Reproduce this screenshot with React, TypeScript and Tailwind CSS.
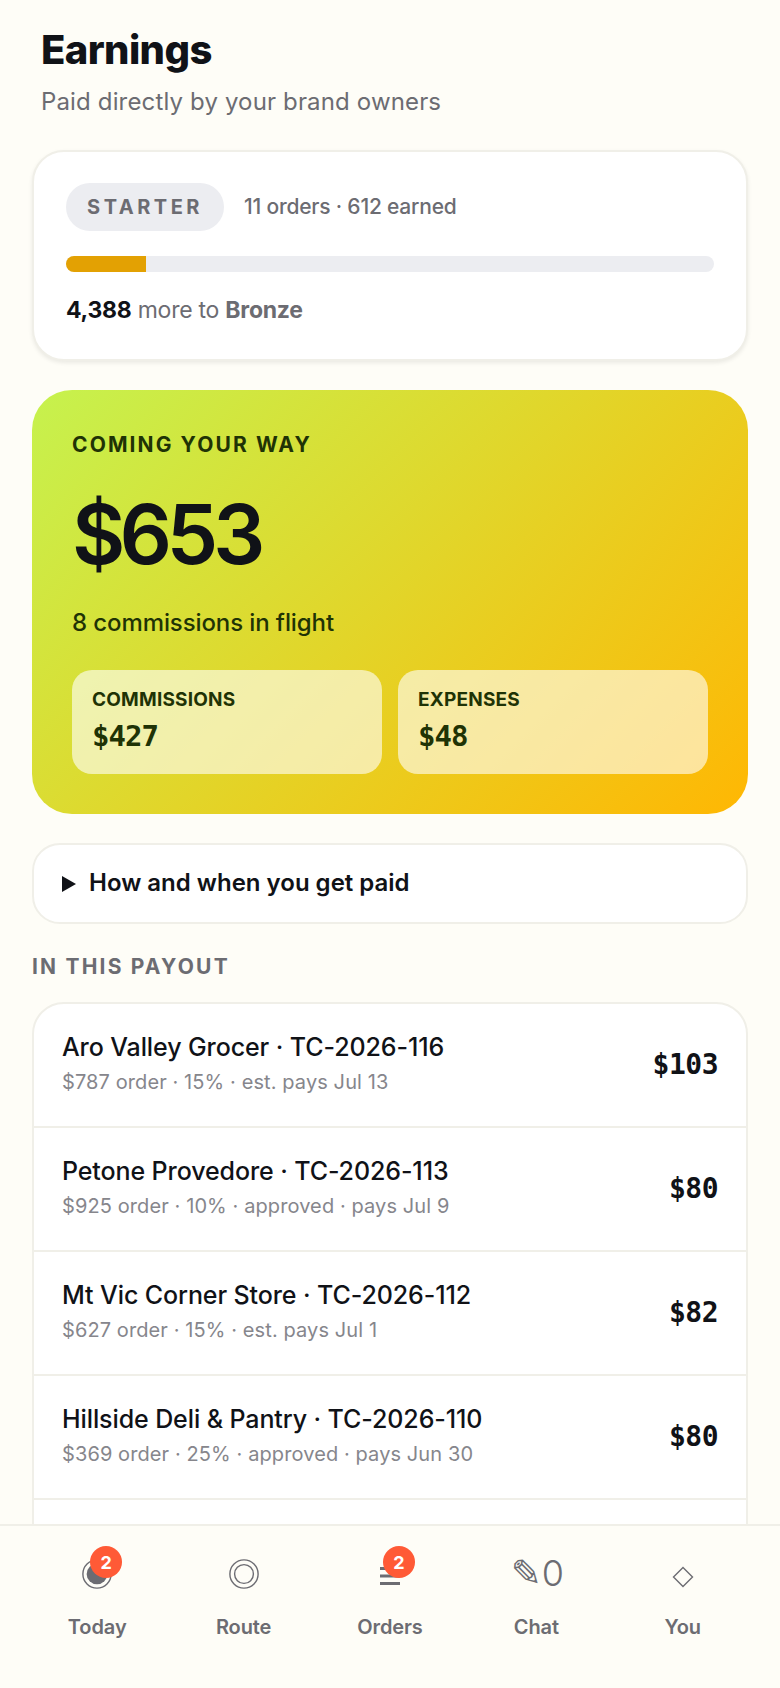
const rows = [
  { name: 'Aro Valley Grocer · TC-2026-116', meta: '$787 order · 15% · est. pays Jul 13', amount: '$103' },
  { name: 'Petone Provedore · TC-2026-113', meta: '$925 order · 10% · approved · pays Jul 9', amount: '$80' },
  { name: 'Mt Vic Corner Store · TC-2026-112', meta: '$627 order · 15% · est. pays Jul 1', amount: '$82' },
  { name: 'Hillside Deli & Pantry · TC-2026-110', meta: '$369 order · 25% · approved · pays Jun 30', amount: '$80' },
];

function TodayIcon() {
  return (
    <svg width="34" height="34" viewBox="0 0 34 34" fill="none">
      <circle cx="17" cy="17" r="15" stroke="#6c6c72" strokeWidth="1.5" />
      <circle cx="17" cy="17" r="11" fill="#6c6c72" />
    </svg>
  );
}

function RouteIcon() {
  return (
    <svg width="34" height="34" viewBox="0 0 34 34" fill="none" stroke="#6c6c72" strokeWidth="1.5">
      <circle cx="17" cy="17" r="15" />
      <circle cx="17" cy="17" r="10" />
    </svg>
  );
}

function OrdersIcon() {
  return (
    <svg width="22" height="22" viewBox="0 0 22 22" fill="#6c6c72">
      <rect x="1" y="4" width="20" height="3" />
      <rect x="1" y="11.5" width="20" height="3" />
      <rect x="1" y="19" width="20" height="3" />
    </svg>
  );
}

function YouIcon() {
  return (
    <svg width="22" height="22" viewBox="0 0 22 22" fill="none" stroke="#6c6c72" strokeWidth="1.4" className="mt-[5px]">
      <path d="M11 1.5 20.5 11 11 20.5 1.5 11z" />
    </svg>
  );
}

const navItems = [
  { label: 'Today', icon: <TodayIcon />, badge: '2' },
  { label: 'Route', icon: <RouteIcon /> },
  { label: 'Orders', icon: <OrdersIcon />, badge: '2' },
  {
    label: 'Chat',
    icon: (
      <span className="ml-[2px] text-[#6c6c72]">
        <span className="font-['DejaVu_Sans',sans-serif] text-[37px]">✎</span>
        <span className="text-[36px] font-light">0</span>
      </span>
    ),
  },
  { label: 'You', icon: <YouIcon /> },
];

export default function App() {
  return (
    <div className="relative h-[1688px] overflow-hidden bg-[#fefdf7] font-['Inter','Noto_Sans',sans-serif] text-[#101217]">
      <div className="px-8 pt-[26px]">
        <h1 className="pl-[9px] text-[40px] leading-[48px] font-extrabold tracking-[-0.6px]">Earnings</h1>
        <p className="mt-[11px] pl-[9px] text-[24px] leading-[34px] tracking-[0.15px] text-[#6c6c72]">Paid directly by your brand owners</p>

        {/* Tier progress */}
        <div className="mt-[31px] h-[211px] rounded-[32px] border-2 border-[#f0efe8] bg-white px-8 pt-[31px] shadow-[0_2px_4px_rgba(0,0,0,0.08)]">
          <div className="flex items-center gap-5">
            <span className="flex h-12 w-[158px] items-center justify-center rounded-3xl bg-[#ecedf1] text-[20px] font-bold tracking-[3.5px] text-[#6c6c72]">STARTER</span>
            <span className="text-[21px] font-medium tracking-[-0.2px] text-[#6c6c72]">11 orders · 612 earned</span>
          </div>
          <div className="mt-[25px] h-4 overflow-hidden rounded-lg bg-[#ecedf1]">
            <div className="h-full w-[80px] bg-[#e3a103]" />
          </div>
          <p className="mt-[22px] text-[23px] leading-[32px] tracking-[-0.25px] text-[#6c6c72]">
            <b className="font-bold text-[#101217]">4,388</b> more to <b className="font-bold">Bronze</b>
          </p>
        </div>

        {/* Hero */}
        <div className="mt-[29px] h-[424px] rounded-[40px] bg-[linear-gradient(135deg,#c6f24e_0%,#ffb703_100%)] px-10 pt-[40px]">
          <p className="text-[21px] leading-[30px] font-bold tracking-[2.1px] text-[#1f3305]">COMING YOUR WAY</p>
          <p className="mt-[25px] text-[82px] leading-[100px] font-semibold tracking-[-6px] tabular-nums">$653</p>
          <p className="mt-[21px] text-[24px] leading-[34px] font-medium tracking-[-0.1px] text-[#1f3305]">8 commissions in flight</p>
          <div className="mt-[30px] grid grid-cols-2 gap-4">
            <div className="h-[104px] rounded-[20px] bg-white/60 px-5 pt-[17px] text-[#1f3305]">
              <p className="text-[19px] leading-[26px] font-bold tracking-[0.2px]">COMMISSIONS</p>
              <p className="mt-[5px] font-['DejaVu_Sans_Mono',monospace] text-[29px] leading-[36px] font-bold tracking-[-1px]">$427</p>
            </div>
            <div className="h-[104px] rounded-[20px] bg-white/60 px-5 pt-[17px] text-[#1f3305]">
              <p className="text-[19px] leading-[26px] font-bold tracking-[0.2px]">EXPENSES</p>
              <p className="mt-[5px] font-['DejaVu_Sans_Mono',monospace] text-[29px] leading-[36px] font-bold tracking-[-1px]">$48</p>
            </div>
          </div>
        </div>

        {/* Disclosure */}
        <div className="mt-[29px] flex h-[81px] items-center gap-[13px] rounded-[28px] border-2 border-[#f0efe8] bg-white pl-[28px]">
          <svg width="14" height="16" viewBox="0 0 14 16"><path d="M0 0l14 8-14 8z" fill="#101217" /></svg>
          <span className="mb-[2px] text-[24px] font-semibold">How and when you get paid</span>
        </div>

        <p className="mt-[29px] text-[21px] leading-[28px] font-bold tracking-[2.2px] text-[#6c6c72]">IN THIS PAYOUT</p>

        {/* Payout list, the last row runs under the nav */}
        <div className="mt-[21px] overflow-hidden rounded-[32px] border-2 border-[#f0efe8] bg-white">
          {rows.map((row, i) => (
            <div key={row.name} className={`flex items-center justify-between px-[28px] ${i > 0 ? 'h-[124px] border-t-2 border-[#f0efe8]' : 'h-[122px]'}`}>
              <div className="mb-[3px]">
                <p className="text-[25px] leading-[34px] font-medium tracking-[-0.1px]">{row.name}</p>
                <p className="mt-[3px] text-[20px] leading-[30px] tracking-[0.1px] text-[#86868c]">{row.meta}</p>
              </div>
              <span className="font-['DejaVu_Sans_Mono',monospace] text-[28px] font-bold tracking-[-0.5px]">{row.amount}</span>
            </div>
          ))}
          <div className="h-[124px] border-t-2 border-[#f0efe8]" />
        </div>
      </div>

      {/* Bottom nav */}
      <nav className="absolute inset-x-0 bottom-0 grid h-[164px] grid-cols-5 border-t-2 border-[#f0efe8] bg-[#fefdf7] px-6">
        {navItems.map((item) => (
          <div key={item.label} className="flex flex-col items-center pt-[28px]">
            <div className="relative flex h-[40px] w-[32px] items-center justify-center whitespace-nowrap">
              {item.icon}
              {item.badge && (
                <span className="absolute -top-[8px] left-[9px] flex h-8 w-8 items-center justify-center rounded-full bg-[#ff5a36] text-[18px] font-bold text-white">{item.badge}</span>
              )}
            </div>
            <span className="mt-[19px] text-[20px] leading-[28px] font-semibold tracking-[-0.1px] text-[#6c6c72]">{item.label}</span>
          </div>
        ))}
      </nav>
    </div>
  );
}
